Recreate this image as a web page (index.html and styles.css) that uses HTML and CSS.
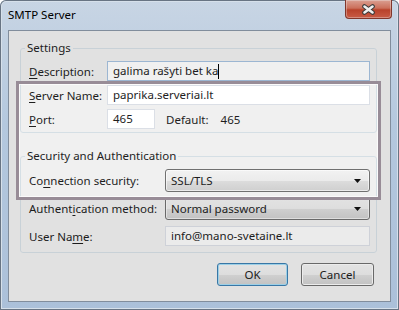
FILE: index.html
```html
<!DOCTYPE html>
<html lang="lt">
<head>
    <meta charset="UTF-8">
    <title>SMTP Server</title>
    <link rel="stylesheet" href="styles.css">
</head>
<body>
    <div class="window">
        <!-- Lango antraštė -->
        <div class="titlebar">
            <span class="title">SMTP Server</span>
            <div class="close-btn">
                <svg width="15" height="11" viewBox="-7.5 -5.5 15 11">
                    <path d="M-4,-3 L4,3 M4,-3 L-4,3" stroke="#3f3f3f" stroke-width="4.6" stroke-linecap="round"/>
                    <path d="M-4,-3 L4,3 M4,-3 L-4,3" stroke="#ffffff" stroke-width="2.6" stroke-linecap="round"/>
                </svg>
            </div>
        </div>

        <div class="client">
            <fieldset class="group">
                <legend>Settings</legend>
                <div class="row">
                    <span class="lbl"><u>D</u>escription:</span>
                    <div class="field field-focus">galima rašyti bet ka<span class="caret"></span></div>
                </div>
                <div class="row">
                    <span class="lbl"><u>S</u>erver Name:</span>
                    <div class="field">paprika.serveriai.lt</div>
                </div>
                <div class="row">
                    <span class="lbl"><u>P</u>ort:</span>
                    <div class="field field-port">465</div>
                    <span class="default">Default:</span>
                    <span class="default-val">465</span>
                </div>
            </fieldset>

            <fieldset class="group group-security">
                <legend>Security and Authentication</legend>
                <div class="row row-tall">
                    <span class="lbl lbl-wide">Co<u>n</u>nection security:</span>
                    <div class="select">
                        <span>SSL/TLS</span>
                        <svg width="8" height="4" viewBox="0 0 8 4"><path d="M0,0 H7 L3.5,4 Z" fill="#111"/></svg>
                    </div>
                </div>
                <div class="row row-tall">
                    <span class="lbl lbl-wide">Authent<u>i</u>cation method:</span>
                    <div class="select">
                        <span>Normal password</span>
                        <svg width="8" height="4" viewBox="0 0 8 4"><path d="M0,0 H7 L3.5,4 Z" fill="#111"/></svg>
                    </div>
                </div>
                <div class="row row-user">
                    <span class="lbl lbl-wide">User Na<u>m</u>e:</span>
                    <div class="field field-grey">info@mano-svetaine.lt</div>
                </div>
            </fieldset>

            <div class="buttons">
                <button class="btn btn-ok">OK</button>
                <button class="btn btn-cancel">Cancel</button>
            </div>
        </div>

        <!-- Paryškinta sritis -->
        <div class="highlight"></div>
    </div>
</body>
</html>
```

FILE: styles.css
```css
body {
    margin: 0;
    font-family: "Noto Sans", "Open Sans", sans-serif;
    font-size: 11.5px;
    color: #1e1e1e;
}

.window {
    position: relative;
    width: 399px;
    height: 310px;
    overflow: hidden;
    background: linear-gradient(#d5e3f3, #c0d5ec 40%, #b6cde7);
    box-shadow: inset 0 0 0 1px #6f7c8c, inset 0 0 0 2px #e4eef9;
    border-radius: 6px 6px 0 0;
}

.titlebar {
    display: flex;
    justify-content: space-between;
    align-items: flex-start;
    height: 30px;
    padding-left: 8px;
}

.title {
    line-height: 29px;
    color: #000;
}

.close-btn {
    width: 47px;
    height: 19px;
    margin-right: 7px;
    box-sizing: border-box;
    border: 1px solid #8a3a2e;
    border-top: none;
    border-radius: 0 0 4px 4px;
    background: linear-gradient(#e9aa9c, #d87761 45%, #c4462d 55%, #d6614a);
    box-shadow: inset 0 0 0 1px rgba(255, 255, 255, 0.35);
    display: flex;
    align-items: center;
    justify-content: center;
}

.client {
    margin: 0 8px;
    height: 272px;
    box-sizing: border-box;
    border: 1px solid #8a96a6;
    background: #f0f0f0;
    padding: 9px 13px 0 11px;
}

.group {
    margin: 0;
    border: 1px solid #d5dfe5;
    border-radius: 3px;
    padding: 5px 6px 3px 8px;
}

.group legend {
    padding: 0 2px;
    margin-left: -4px;
    line-height: 16px;
}

.group-security {
    margin-top: 15px;
    padding-bottom: 6px;
}

.row {
    display: flex;
    align-items: center;
    height: 20px;
    margin-top: 4px;
}

.row:first-of-type {
    margin-top: 0;
}

.row-tall {
    height: 23px;
    margin-top: 5px;
}

.row-user {
    margin-top: 6px;
}

.lbl {
    width: 78px;
    flex-shrink: 0;
}

.lbl-wide {
    width: 136px;
}

.lbl u {
    text-underline-offset: 2px;
}

.field {
    flex: 1;
    height: 20px;
    box-sizing: border-box;
    border: 1px solid #dbdfe6;
    background: #fff;
    padding: 0 5px;
    line-height: 18px;
    white-space: nowrap;
}

.field-focus {
    border-color: #a6c2e0;
}

.field-grey {
    background: #fafafa;
}

.field-port {
    flex: none;
    width: 48px;
}

.caret {
    display: inline-block;
    width: 1px;
    height: 15px;
    background: #000;
    vertical-align: -4px;
}

.default {
    margin-left: 11px;
}

.default-val {
    margin-left: 12px;
}

.select {
    flex: 1;
    height: 23px;
    box-sizing: border-box;
    border: 1px solid #707070;
    border-radius: 3px;
    background: linear-gradient(#f2f2f2, #ebebeb 50%, #dddddd 50%, #cfcfcf);
    box-shadow: inset 0 0 0 1px rgba(255, 255, 255, 0.6);
    display: flex;
    align-items: center;
    justify-content: space-between;
    padding: 0 7px 0 5px;
}

.buttons {
    display: flex;
    justify-content: flex-end;
    gap: 13px;
    margin-top: 10px;
    padding-right: 3px;
}

.btn {
    height: 23px;
    border: 1px solid #707070;
    border-radius: 3px;
    background: linear-gradient(#f2f2f2, #ebebeb 50%, #dddddd 50%, #cfcfcf);
    box-shadow: inset 0 0 0 1px #fbfbfb;
    font-family: inherit;
    font-size: 11.5px;
    color: #1e1e1e;
    padding: 0;
}

.btn-ok {
    width: 71px;
    border-color: #3c7fb1;
    box-shadow: inset 0 0 0 1px #a6dcf5;
}

.btn-cancel {
    width: 73px;
}

/* Paryškinimo rėmelis */
.highlight {
    position: absolute;
    left: 16px;
    top: 81px;
    width: 365px;
    height: 119px;
    box-sizing: border-box;
    border: 3px solid #988c97;
    box-shadow: 0 0 0 500px rgba(0, 0, 0, 0.06), inset 0 0 0 1px rgba(255, 255, 255, 0.7);
    pointer-events: none;
}
```
